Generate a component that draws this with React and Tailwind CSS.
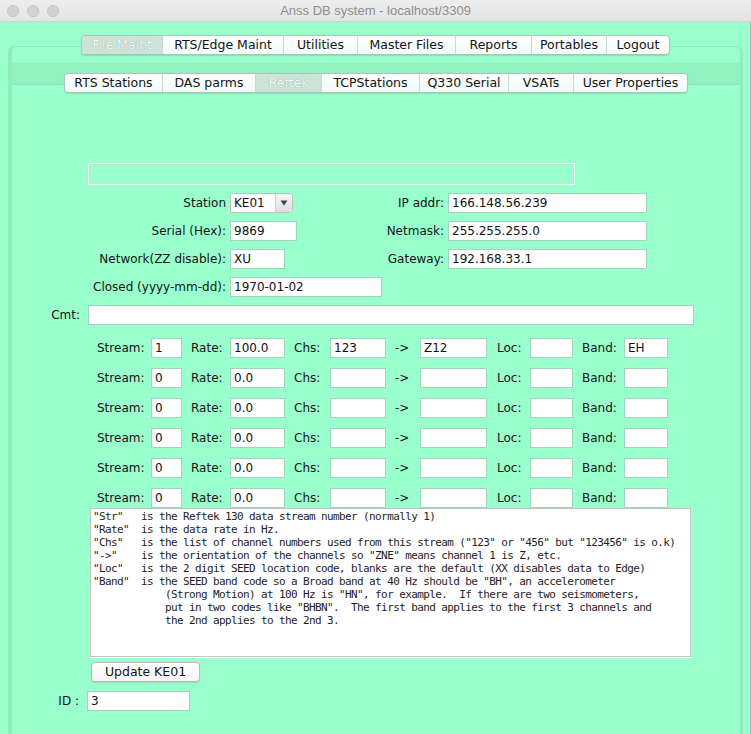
import React from "react";

const OUTER_TABS = [
  ["File Maint", "w-[80px]", true],
  ["RTS/Edge Maint", "w-[121px]", false],
  ["Utilities", "w-[74px]", false],
  ["Master Files", "w-[98px]", false],
  ["Reports", "w-[76px]", false],
  ["Portables", "w-[75px]", false],
  ["Logout", "w-[63px]", false],
];

const INNER_TABS = [
  ["RTS Stations", "w-[97px]", false],
  ["DAS parms", "w-[93px]", false],
  ["Reftek", "w-[66px]", true],
  ["TCPStations", "w-[98px]", false],
  ["Q330 Serial", "w-[89px]", false],
  ["VSATs", "w-[65px]", false],
  ["User Properties", "w-[114px]", false],
];

function TabStrip({ tabs }) {
  return (
    <div className="flex h-[20px] rounded-[4px] border border-[#a9c5b7] bg-gradient-to-b from-white to-[#f1faf6] shadow-[0_1px_1px_rgba(0,0,0,0.12)] overflow-hidden">
      {tabs.map(([label, w, sel], i) => (
        <div
          key={label}
          className={`${w} flex items-center justify-center text-[12.5px] leading-none ${
            i > 0 ? "border-l border-[#c8dad1]" : ""
          } ${
            sel
              ? "bg-[#cbe4d7] text-[#f8f8f8] [text-shadow:0_0_1px_#7d9187]"
              : "text-[#141414]"
          }`}
        >
          {label}
        </div>
      ))}
    </div>
  );
}

function Field({ w, v }) {
  return (
    <div
      className={`${w} h-[20px] shrink-0 bg-white border border-[#9fd5ba] pl-[3px] flex items-center text-[12px] text-[#111] leading-none`}
    >
      {v}
    </div>
  );
}

const HELP = `"Str"   is the Reftek 130 data stream number (normally 1)
"Rate"  is the data rate in Hz.
"Chs"   is the list of channel numbers used from this stream ("123" or "456" but "123456" is o.k)
"->"    is the orientation of the channels so "ZNE" means channel 1 is Z, etc.
"Loc"   is the 2 digit SEED location code, blanks are the default (XX disables data to Edge)
"Band"  is the SEED band code so a Broad band at 40 Hz should be "BH", an accelerometer
            (Strong Motion) at 100 Hz is "HN", for example.  If there are two seismometers,
            put in two codes like "BHBN".  The first band applies to the first 3 channels and
            the 2nd applies to the 2nd 3.`;

const STREAMS = [
  ["1", "100.0", "123", "Z12", "", "EH"],
  ["0", "0.0", "", "", "", ""],
  ["0", "0.0", "", "", "", ""],
  ["0", "0.0", "", "", "", ""],
  ["0", "0.0", "", "", "", ""],
  ["0", "0.0", "", "", "", ""],
];

function StreamRow({ d, first }) {
  return (
    <div className={`flex items-center h-[20px] ml-[84px] ${first ? "mt-[13px]" : "mt-[10px]"}`}>
      <div className="w-[55px] shrink-0 pl-[1px]">Stream:</div>
      <Field w="w-[31px]" v={d[0]} />
      <div className="w-[48px] shrink-0 pl-[9px]">Rate:</div>
      <Field w="w-[55px]" v={d[1]} />
      <div className="w-[45px] shrink-0 pl-[9px]">Chs:</div>
      <Field w="w-[56px]" v={d[2]} />
      <div className="w-[34px] shrink-0 pl-[9px]">-&gt;</div>
      <Field w="w-[67px]" v={d[3]} />
      <div className="w-[43px] shrink-0 pl-[10px]">Loc:</div>
      <Field w="w-[43px]" v={d[4]} />
      <div className="w-[51px] shrink-0 pl-[9px]">Band:</div>
      <Field w="w-[44px]" v={d[5]} />
    </div>
  );
}

export default function App() {
  return (
    <div className="w-[751px] h-[734px] bg-[#99ffcc] overflow-hidden flex flex-col font-['DejaVu_Sans','Liberation_Sans',sans-serif] text-[12px] text-[#141414]">
      {/* Title bar */}
      <div className="h-[22px] shrink-0 bg-gradient-to-b from-[#eeeeee] to-[#e4e4e4] border-b border-[#d2d2d2] grid grid-cols-[1fr_auto_1fr] items-center">
        <div className="flex items-center gap-[8px] pl-[7px]">
          <div className="w-[12px] h-[12px] rounded-full bg-[#d3d3d3] border border-[#c2c2c2]" />
          <div className="w-[12px] h-[12px] rounded-full bg-[#d3d3d3] border border-[#c2c2c2]" />
          <div className="w-[12px] h-[12px] rounded-full bg-[#d3d3d3] border border-[#c2c2c2]" />
        </div>
        <div className="font-['Liberation_Sans',sans-serif] text-[13px] text-[#8e8e8e]">
          Anss DB system - localhost/3309
        </div>
        <div />
      </div>

      <div className="flex-1 flex flex-col border-r border-[#b5b5b5]">
        {/* Outer tabs */}
        <div className="pt-[13px] pl-[81px] relative z-10 flex">
          <TabStrip tabs={OUTER_TABS} />
        </div>

        {/* Outer pane */}
        <div className="mx-[8px] mr-[7px] -mt-[9px] flex-1 flex flex-col border-t border-l-[4px] border-r-[3px] border-[#8eecbd] rounded-t-[6px]">
          <div className="h-[16px] shrink-0" />
          <div className="h-[21px] shrink-0 bg-[#92f1c1] relative z-10">
            <div className="pt-[10px] pl-[52px] flex">
              <TabStrip tabs={INNER_TABS} />
            </div>
          </div>

          {/* Content */}
          <div className="flex-1 border-t border-[#89e5b7] flex flex-col">
            <div className="mt-[78px] ml-[76px] w-[487px] h-[22px] border border-[#f3fff9] shadow-[inset_0_0_0_1px_#bde8d1]" />

            {/* Station / IP rows */}
            <div className="flex items-center h-[20px] mt-[8px]">
              <div className="w-[218px] shrink-0 text-right pr-[4px]">Station</div>
              <div className="w-[152px] shrink-0">
                <div className="w-[63px] h-[20px] flex bg-white border border-[#b9c3be] rounded-r-[4px] overflow-hidden">
                  <div className="flex-1 pl-[3px] flex items-center text-[12px] leading-none">KE01</div>
                  <div className="w-[17px] flex items-center justify-center bg-gradient-to-b from-[#f7f7f7] to-[#dedede] border-l border-[#cfcfcf]">
                    <svg width="8" height="6" viewBox="0 0 8 6">
                      <path d="M0.5 0.5 L7.5 0.5 L4 5.5 Z" fill="#444" />
                    </svg>
                  </div>
                </div>
              </div>
              <div className="w-[66px] shrink-0 text-right pr-[4px]">IP addr:</div>
              <Field w="w-[199px]" v="166.148.56.239" />
            </div>

            <div className="flex items-center h-[20px] mt-[8px]">
              <div className="w-[218px] shrink-0 text-right pr-[4px]">Serial (Hex):</div>
              <div className="w-[152px] shrink-0">
                <Field w="w-[67px]" v="9869" />
              </div>
              <div className="w-[66px] shrink-0 text-right pr-[4px]">Netmask:</div>
              <Field w="w-[199px]" v="255.255.255.0" />
            </div>

            <div className="flex items-center h-[20px] mt-[8px]">
              <div className="w-[218px] shrink-0 text-right pr-[4px] whitespace-nowrap">Network(ZZ disable):</div>
              <div className="w-[152px] shrink-0">
                <Field w="w-[55px]" v="XU" />
              </div>
              <div className="w-[66px] shrink-0 text-right pr-[4px]">Gateway:</div>
              <Field w="w-[199px]" v="192.168.33.1" />
            </div>

            <div className="flex items-center h-[20px] mt-[8px]">
              <div className="w-[218px] shrink-0 text-right pr-[4px] whitespace-nowrap">Closed (yyyy-mm-dd):</div>
              <Field w="w-[152px]" v="1970-01-02" />
            </div>

            <div className="flex items-center h-[20px] mt-[8px]">
              <div className="w-[76px] shrink-0 text-right pr-[8px]">Cmt:</div>
              <Field w="w-[606px]" v="" />
            </div>

            {STREAMS.map((d, i) => (
              <StreamRow key={i} d={d} first={i === 0} />
            ))}

            <div className="mt-0 ml-[78px] w-[601px] h-[149px] shrink-0 bg-white border border-[#c3c3c3] shadow-[0_1px_0_#ffffff] pl-[2px] pt-[1px] overflow-hidden">
              <pre className="font-['DejaVu_Sans_Mono','Liberation_Mono',monospace] text-[11px] tracking-[-0.62px] leading-[13px] text-[#1e1e1e] whitespace-pre">
                {HELP}
              </pre>
            </div>

            <div className="mt-[5px] ml-[79px] w-[109px] h-[20px] rounded-[4px] bg-gradient-to-b from-white to-[#f6f6f6] border border-[#b6bdb9] shadow-[0_1px_1px_rgba(0,0,0,0.12)] flex items-center justify-center text-[12.5px] leading-none">
              Update KE01
            </div>

            <div className="flex items-center h-[20px] mt-[9px]">
              <div className="w-[75px] shrink-0 text-right pr-[8px]">ID :</div>
              <Field w="w-[103px]" v="3" />
            </div>
          </div>
        </div>
      </div>
    </div>
  );
}
